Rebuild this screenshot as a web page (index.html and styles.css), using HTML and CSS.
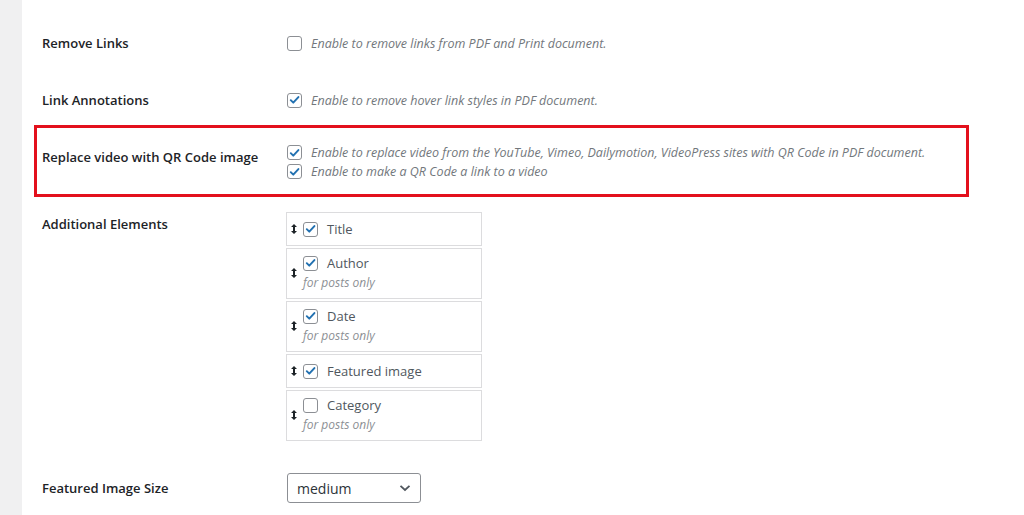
FILE: index.html
```html
<!DOCTYPE html>
<html>
<head>
<meta charset="utf-8">
<link rel="stylesheet" href="styles.css">
</head>
<body>
<div class="page">
  <div class="sidebar"></div>
  <div class="panel">
    <div class="row row-first">
      <div class="label">Remove Links</div>
      <div class="control">
        <div class="opt"><span class="cb"></span><span class="desc">Enable to remove links from PDF and Print document.</span></div>
      </div>
    </div>
    <div class="row row-second">
      <div class="label">Link Annotations</div>
      <div class="control">
        <div class="opt"><span class="cb checked"><svg viewBox="0 0 16 16"><path d="M3.4 8.2 L6.5 11.3 L12.8 4.4"/></svg></span><span class="desc">Enable to remove hover link styles in PDF document.</span></div>
      </div>
    </div>
    <div class="highlight">
      <div class="row row-qr">
        <div class="label">Replace video with QR Code image</div>
        <div class="control">
          <div class="opt tight"><span class="cb checked"><svg viewBox="0 0 16 16"><path d="M3.4 8.2 L6.5 11.3 L12.8 4.4"/></svg></span><span class="desc">Enable to replace video from the YouTube, Vimeo, Dailymotion, VideoPress sites with QR Code in PDF document.</span></div>
          <div class="opt tight"><span class="cb checked"><svg viewBox="0 0 16 16"><path d="M3.4 8.2 L6.5 11.3 L12.8 4.4"/></svg></span><span class="desc">Enable to make a QR Code a link to a video</span></div>
        </div>
      </div>
    </div>
    <div class="row row-elements">
      <div class="label">Additional Elements</div>
      <div class="control">
        <ul class="sortable">
          <li class="item">
            <svg class="drag" viewBox="0 0 6 10"><path d="M3 0 L6 3 H4 V7 H6 L3 10 L0 7 H2 V3 H0 Z"/></svg>
            <div class="item-body">
              <div class="item-line"><span class="cb checked"><svg viewBox="0 0 16 16"><path d="M3.4 8.2 L6.5 11.3 L12.8 4.4"/></svg></span><span class="item-name">Title</span></div>
            </div>
          </li>
          <li class="item two">
            <svg class="drag" viewBox="0 0 6 10"><path d="M3 0 L6 3 H4 V7 H6 L3 10 L0 7 H2 V3 H0 Z"/></svg>
            <div class="item-body">
              <div class="item-line"><span class="cb checked"><svg viewBox="0 0 16 16"><path d="M3.4 8.2 L6.5 11.3 L12.8 4.4"/></svg></span><span class="item-name">Author</span></div>
              <div class="item-note">for posts only</div>
            </div>
          </li>
          <li class="item two">
            <svg class="drag" viewBox="0 0 6 10"><path d="M3 0 L6 3 H4 V7 H6 L3 10 L0 7 H2 V3 H0 Z"/></svg>
            <div class="item-body">
              <div class="item-line"><span class="cb checked"><svg viewBox="0 0 16 16"><path d="M3.4 8.2 L6.5 11.3 L12.8 4.4"/></svg></span><span class="item-name">Date</span></div>
              <div class="item-note">for posts only</div>
            </div>
          </li>
          <li class="item">
            <svg class="drag" viewBox="0 0 6 10"><path d="M3 0 L6 3 H4 V7 H6 L3 10 L0 7 H2 V3 H0 Z"/></svg>
            <div class="item-body">
              <div class="item-line"><span class="cb checked"><svg viewBox="0 0 16 16"><path d="M3.4 8.2 L6.5 11.3 L12.8 4.4"/></svg></span><span class="item-name">Featured image</span></div>
            </div>
          </li>
          <li class="item two">
            <svg class="drag" viewBox="0 0 6 10"><path d="M3 0 L6 3 H4 V7 H6 L3 10 L0 7 H2 V3 H0 Z"/></svg>
            <div class="item-body">
              <div class="item-line"><span class="cb"></span><span class="item-name">Category</span></div>
              <div class="item-note">for posts only</div>
            </div>
          </li>
        </ul>
      </div>
    </div>
    <div class="row row-size">
      <div class="label">Featured Image Size</div>
      <div class="control">
        <div class="select"><span>medium</span><svg class="chev" viewBox="0 0 12 8"><path d="M1.5 1.8 L6 6 L10.5 1.8"/></svg></div>
      </div>
    </div>
  </div>
</div>
</body>
</html>
```

FILE: styles.css
```css
html, body {
  margin: 0;
  padding: 0;
  background: #ffffff;
}
body {
  font-family: "Open Sans", "Noto Sans", sans-serif;
  color: #1d2327;
  overflow: hidden;
}
.page {
  display: flex;
  width: 1024px;
  height: 515px;
}
.sidebar {
  width: 22px;
  flex: none;
  background: #f0f0f1;
}
.panel {
  flex: 1;
  background: #ffffff;
  padding-top: 15px;
}
.row {
  display: grid;
  grid-template-columns: 244px 1fr;
  padding: 18px 0 19px 20px;
  align-items: start;
}
.row-second {
  padding-bottom: 15px;
}
.label {
  font-size: 13px;
  font-weight: 600;
  line-height: 20px;
  color: #1d2327;
}
.opt {
  display: flex;
  align-items: center;
  height: 20px;
}
.opt.tight {
  height: 19px;
}
.cb {
  width: 13px;
  height: 13px;
  border: 1px solid #8c8f94;
  border-radius: 3px;
  background: #fff;
  flex: none;
  display: flex;
  align-items: center;
  justify-content: center;
  margin-left: 1px;
}
.cb svg {
  width: 14px;
  height: 14px;
  fill: none;
  stroke: #2271b1;
  stroke-width: 2.4;
  stroke-linecap: round;
  stroke-linejoin: round;
}
.desc {
  margin-left: 9px;
  font-size: 12.5px;
  font-style: italic;
  color: #72777c;
  white-space: nowrap;
}
.highlight {
  margin-left: 12px;
  width: 929px;
  border: 3px solid #e3101c;
}
.row-qr {
  padding: 15px 0 13px 5px;
  grid-template-columns: 244px 1fr;
}
.row-qr .label {
  padding-top: 4px;
}
.row-elements {
  padding: 15px 0 0 20px;
}
.row-elements .label {
  padding-top: 2px;
}
.sortable {
  list-style: none;
  margin: 0;
  padding: 0;
  width: 196px;
  display: flex;
  flex-direction: column;
  gap: 2px;
}
.item {
  border: 1px solid #dcdcde;
  display: flex;
  align-items: center;
  padding: 6px 0 6px 4px;
  background: #fff;
}
.item.two {
  padding: 4px 0 5px 4px;
}
.drag {
  width: 6px;
  height: 10px;
  fill: #1d2327;
  flex: none;
}
.item-body {
  margin-left: 6px;
  display: flex;
  flex-direction: column;
}
.item-line {
  display: flex;
  align-items: center;
  height: 20px;
}
.item-line .cb {
  margin-left: 0;
}
.item-name {
  margin-left: 9px;
  font-size: 13px;
  color: #50575e;
}
.item-note {
  font-size: 12px;
  font-style: italic;
  color: #8c8f94;
  line-height: 20px;
}
.row-size {
  padding: 32px 0 0 20px;
  align-items: center;
}
.select {
  border: 1px solid #8c8f94;
  border-radius: 3px;
  display: flex;
  align-items: center;
  justify-content: space-between;
  padding: 0 9px 0 9px;
  box-sizing: border-box;
  width: 134px;
  height: 30px;
  margin-left: 1px;
  font-size: 14px;
  color: #2c3338;
}
.chev {
  width: 12px;
  height: 8px;
  fill: none;
  stroke: #50575e;
  stroke-width: 1.8;
}
```
